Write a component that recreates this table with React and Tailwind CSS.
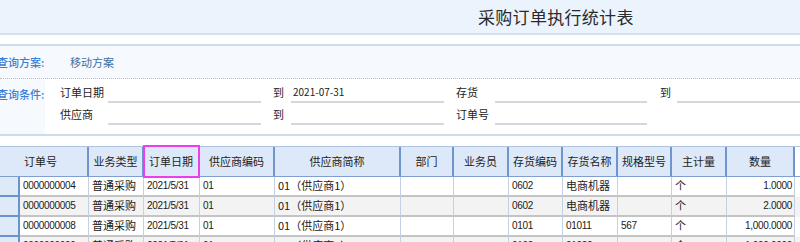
import React from 'react';

const cols = [
  { t: '订单号', w: 'w-[89px]', first: true },
  { t: '业务类型', w: 'w-[55px]' },
  { t: '订单日期', w: 'w-[56px]', mark: true },
  { t: '供应商编码', w: 'w-[75px]' },
  { t: '供应商简称', w: 'w-[126px]' },
  { t: '部门', w: 'w-[53px]' },
  { t: '业务员', w: 'w-[55px]' },
  { t: '存货编码', w: 'w-[54px]' },
  { t: '存货名称', w: 'w-[55px]' },
  { t: '规格型号', w: 'w-[54px]' },
  { t: '主计量', w: 'w-[55px]' },
  { t: '数量', w: 'w-[68px]' },
];

// body widths: selector + 订单号 share the first header cell
const bodyW = ['w-[69px]', ...cols.slice(1).map((c) => c.w)];

const rows = [
  ['0000000004', '普通采购', '2021/5/31', '01', '01（供应商1）', '', '', '0602', '电商机器', '', '个', '1.0000'],
  ['0000000005', '普通采购', '2021/5/31', '01', '01（供应商1）', '', '', '0602', '电商机器', '', '个', '2.0000'],
  ['0000000008', '普通采购', '2021/5/31', '01', '01（供应商1）', '', '', '0101', '01011', '567', '个', '1,000.0000'],
  ['0000000009', '普通采购', '2021/5/31', '01', '01（供应商1）', '', '', '0102', '01022', '', '个', '1,000.0000'],
];

const cjk = /[\u4e00-\u9fff]/;

const Field = ({ w, value }) => (
  <div className={`${w} h-[21px] border-b-2 border-[#d3d7de] flex items-center pl-[2px] text-[10px] text-[#222]`}>
    {value}
  </div>
);

const Label = ({ w, ml, children }) => (
  <div className={`${w} ${ml} h-[21px] flex items-center text-[11px] text-[#222]`}>{children}</div>
);

const App = () => {
  return (
    <div className="w-[800px] h-[242px] overflow-hidden bg-white font-['Liberation_Sans','Noto_Sans_CJK_SC',sans-serif]">
      {/* Title bar */}
      <div className="h-[35px] bg-[#ebf3fd] border-b-2 border-[#d5e1ee] flex items-center pl-[478px]">
        <span className="text-[17px] text-[#2a2a2a] tracking-[0.3px] font-['Noto_Sans_CJK_SC',sans-serif]">
          采购订单执行统计表
        </span>
      </div>

      {/* Query panel */}
      <div className="mt-[9px] border-t-2 border-[#cddcec] border-b-2 bg-[#f6f9fe] font-['Noto_Sans_CJK_SC',sans-serif]">
        <div className="h-[33px] flex items-center border-b border-dotted border-[#b8bcc4]">
          <span className="w-[73px] -ml-[3px] whitespace-nowrap text-[11px] font-medium text-[#3a80d8]">查询方案:</span>
          <span className="text-[11px] text-[#3d6fa8]">移动方案</span>
        </div>
        <div className="flex">
          <div className="w-[45px] pt-[7px] whitespace-nowrap text-[11px] font-medium text-[#3a80d8]">
            <span className="-ml-[3px]">查询条件:</span>
          </div>
          <div className="flex-1 bg-white pt-[3px] pb-[8px] pl-[15px]">
            <div className="flex h-[22px]">
              <Label w="w-[48px]">订单日期</Label>
              <Field w="w-[153px]" />
              <Label w="w-[18px]" ml="ml-[12px]">到</Label>
              <Field w="w-[153px]" value="2021-07-31" />
              <Label w="w-[39px]" ml="ml-[12px]">存货</Label>
              <Field w="w-[152px]" />
              <Label w="w-[17px]" ml="ml-[13px]">到</Label>
              <Field w="flex-1" />
            </div>
            <div className="flex h-[22px]">
              <Label w="w-[48px]">供应商</Label>
              <Field w="w-[153px]" />
              <Label w="w-[18px]" ml="ml-[12px]">到</Label>
              <Field w="w-[153px]" />
              <Label w="w-[39px]" ml="ml-[12px]">订单号</Label>
              <Field w="w-[152px]" />
            </div>
          </div>
        </div>
      </div>

      {/* Grid */}
      <div className="mt-[10px] border-t border-[#aec3df]">
        <div className="flex h-[30px] border-b border-[#7e9fd0]">
          {cols.map((c) => (
            <div
              key={c.t}
              className={`${c.w} relative flex items-center bg-[#dde9f8] border-r-2 border-[#6f95cd] text-[11px] text-[#222] font-['Noto_Sans_CJK_SC',sans-serif] ${
                c.first ? 'pl-[24px]' : 'justify-center'
              }`}
            >
              {c.t}
              {c.mark && (
                <span className="absolute -top-[2px] -bottom-[2px] -left-[1px] -right-[2px] border-2 border-[#ec3ef0]" />
              )}
            </div>
          ))}
        </div>

        {rows.map((r, i) => (
          <div key={i} className={`flex h-[20px] ${i % 2 ? 'bg-[#f3f3f3]' : 'bg-white'}`}>
            <div className="w-[20px] bg-[#dfeaf8] border-r-2 border-b-2 border-[#6a92ce]" />
            {r.map((v, j) => (
              <div
                key={j}
                className={`${bodyW[j]} border-r border-b-2 border-r-[#c3d1e6] border-b-[#c4c4c4] pt-[1px] leading-[15px] text-[#1a1a1a] ${
                  j === r.length - 1 ? 'text-right pr-[2px]' : 'pl-[3px]'
                } ${cjk.test(v) ? "text-[11px] font-['Noto_Sans_CJK_SC',sans-serif]" : 'text-[10px] tracking-[-0.3px]'}`}
              >
                {v}
              </div>
            ))}
          </div>
        ))}
      </div>
    </div>
  );
};

export default App;
